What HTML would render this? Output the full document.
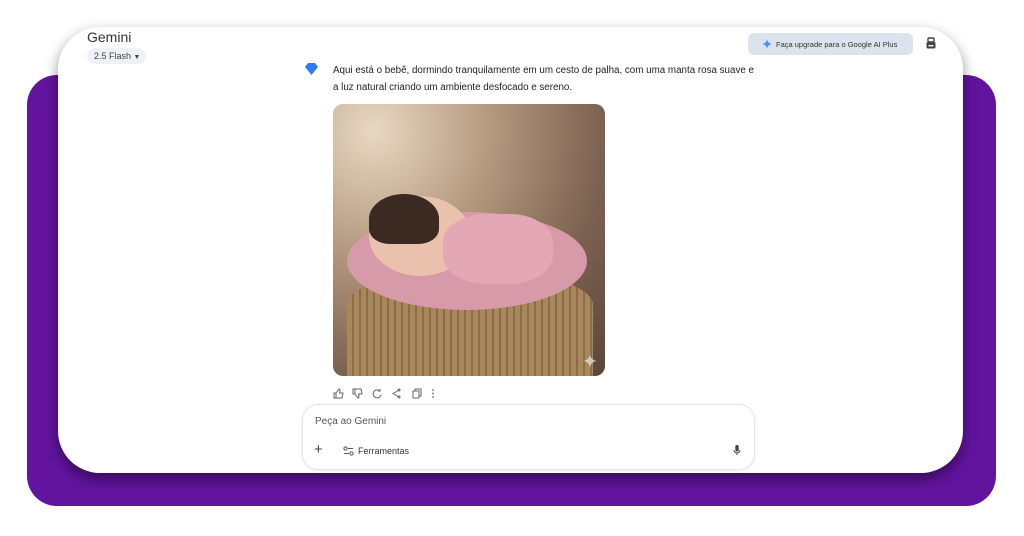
<!DOCTYPE html>
<html><head><meta charset="utf-8"><style>
*{margin:0;padding:0;box-sizing:border-box}
body{width:1024px;height:536px;background:#fff;position:relative;overflow:hidden;font-family:"Liberation Sans",sans-serif;color:#1f1f1f}
.purple{position:absolute;left:27px;top:75px;width:969px;height:431px;background:#62149f;border-radius:30px}
.card{position:absolute;left:58px;top:27px;width:905px;height:446px;background:#fff;border-radius:42px;box-shadow:0 6px 14px rgba(0,0,0,.45)}
.abs{position:absolute}
</style></head><body>
<div class="purple"></div>
<div class="card"></div>
<div class="abs" style="left:87px;top:29px;font-size:14px;color:#333">Gemini</div>
<div class="abs" style="left:87px;top:48px;width:59px;height:16px;background:#eef1f6;border-radius:8px;font-size:9px;color:#444;padding:3px 0 0 7px">2.5 Flash <span style="font-size:7px">▼</span></div>
<div class="abs" style="left:748px;top:33px;width:165px;height:22px;background:#dde3ec;border-radius:6px;font-size:7.5px;color:#333;padding:7px 0 0 28px">Faça upgrade para o Google AI Plus</div>
<svg class="abs" style="left:762px;top:39px" width="10" height="10" viewBox="0 0 10 10"><path d="M5 0Q5.5 4.5 10 5Q5.5 5.5 5 10Q4.5 5.5 0 5Q4.5 4.5 5 0Z" fill="#4a8af4"/></svg>
<svg class="abs" style="left:925px;top:37px" width="12" height="13" viewBox="0 0 12 13"><rect x="3" y="1" width="6" height="4" rx="1" fill="none" stroke="#444" stroke-width="1.4"/><rect x="1.5" y="5" width="9" height="6.5" rx="1.5" fill="#444"/><rect x="3.5" y="8" width="5" height="1.4" fill="#fff"/></svg>
<svg class="abs" style="left:305px;top:63px" width="13" height="12" viewBox="0 0 13 12"><path d="M3 0H10L13 4L6.5 12L0 4Z" fill="#2f7cf0"/></svg>
<div class="abs" style="left:333px;top:62px;width:425px;font-size:9.8px;line-height:17px;color:#222">Aqui está o bebê, dormindo tranquilamente em um cesto de palha, com uma manta rosa suave e a luz natural criando um ambiente desfocado e sereno.</div>
<div class="abs" style="left:333px;top:104px;width:272px;height:272px;border-radius:10px;overflow:hidden;background:radial-gradient(ellipse at 15% 10%,#e8d8c2 0%,#b59a80 35%,#7c6250 70%,#5a4638 100%)">
 <div class="abs" style="left:14px;top:165px;width:246px;height:120px;border-radius:50% 50% 10px 10px/30% 30% 10px 10px;background:repeating-linear-gradient(90deg,#a8875c 0 5px,#8c6c44 5px 7px),#9a7a50;"></div>
 <div class="abs" style="left:14px;top:108px;width:240px;height:98px;border-radius:50%;background:#d79aa8"></div>
 <div class="abs" style="left:36px;top:92px;width:102px;height:80px;border-radius:50%;background:#e9c1ad"></div>
 <div class="abs" style="left:36px;top:90px;width:70px;height:50px;border-radius:50% 50% 30% 30%;background:#3a2a22"></div>
 <div class="abs" style="left:110px;top:110px;width:110px;height:70px;border-radius:40%;background:#e4a7b5"></div>
 <svg class="abs" style="left:250px;top:250px" width="14" height="14" viewBox="0 0 10 10"><path d="M5 0Q5.5 4.5 10 5Q5.5 5.5 5 10Q4.5 5.5 0 5Q4.5 4.5 5 0Z" fill="#ddd" opacity=".8"/></svg>
</div>
<svg class="abs" style="left:333px;top:388px" width="110" height="11" viewBox="0 0 110 11" fill="none" stroke="#666" stroke-width="1">
<path d="M1 5H3V10H1ZM3 5L6 1Q7 1 7 3L6.5 5H10L9 10H3"/>
<path d="M20 6H22V1H20ZM22 6L25 10Q26 10 26 8L25.5 6H29L28 1H22"/>
<path d="M47 3A4 4 0 1 0 48 7M47 1V3H45"/>
<path d="M66 2L60 5.5L66 9"/><circle cx="66" cy="2" r="1"/><circle cx="66" cy="9" r="1"/>
<rect x="80" y="3" width="6" height="7"/><path d="M82 3V1H88V8H86"/>
<circle cx="100" cy="2" r=".4"/><circle cx="100" cy="5.5" r=".4"/><circle cx="100" cy="9" r=".4"/>
</svg>
<div class="abs" style="left:302px;top:404px;width:453px;height:66px;border-radius:16px;border:1px solid #e3e6e8;background:#fff;box-shadow:0 1px 3px rgba(0,0,0,.08)"></div>
<div class="abs" style="left:315px;top:416px;font-size:10px;color:#555">Peça ao Gemini</div>
<div class="abs" style="left:314px;top:441px;font-size:15px;color:#444;font-weight:300">+</div>
<svg class="abs" style="left:343px;top:446px" width="11" height="10" viewBox="0 0 11 10" fill="none" stroke="#555" stroke-width="1"><circle cx="2.5" cy="2.5" r="1.6"/><path d="M5 2.5H10M1 7.5H6"/><circle cx="8.5" cy="7.5" r="1.6"/></svg>
<div class="abs" style="left:358px;top:446px;font-size:9px;color:#333">Ferramentas</div>
<svg class="abs" style="left:733px;top:445px" width="8" height="11" viewBox="0 0 8 11"><rect x="2.3" y="0" width="3.4" height="6.5" rx="1.7" fill="#444"/><path d="M1 5A3 3 0 0 0 7 5M4 8V10" stroke="#444" stroke-width="1" fill="none"/></svg>
</body></html>
